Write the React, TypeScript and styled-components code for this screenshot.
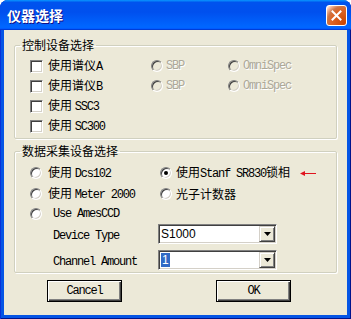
import React from 'react';
import styled, { createGlobalStyle } from 'styled-components';

const GlobalStyle = createGlobalStyle`
    html, body {
        margin: 0;
        padding: 0;
        background: #ffffff;
    }
    body {
        font-family: "Noto Sans CJK SC", "Liberation Sans", sans-serif;
        font-size: 12px;
        color: #000000;
    }
`;

const Window = styled.div`
    width: 351px;
    height: 319px;
    box-sizing: border-box;
    display: flex;
    flex-direction: column;
    background: #0555e5;
    border-radius: 8px 8px 0 0;
    box-shadow: inset 1px 0 #0831d9, inset -1px -1px #00138c;
    overflow: hidden;
`;

const TitleBar = styled.div`
    height: 30px;
    flex: none;
    display: flex;
    align-items: center;
    justify-content: space-between;
    padding: 0 4px 0 7px;
    background: linear-gradient(
        180deg,
        #0997ff,
        #0053ee 8%,
        #0050ee 40%,
        #0066ff 88%,
        #0066ff 93%,
        #005bff 95%,
        #003dd7 96%,
        #003dd7
    );
`;

const TitleText = styled.span`
    color: #ffffff;
    font-family: "Noto Sans CJK SC", sans-serif;
    font-weight: 700;
    font-size: 14px;
    line-height: 16px;
    text-shadow: 1px 1px #0f1089;
`;

const CloseButton = styled.div`
    width: 21px;
    height: 21px;
    box-sizing: border-box;
    border: 1px solid #ffffff;
    border-radius: 3px;
    display: grid;
    place-items: center;
    background: radial-gradient(
        circle at 90% 90%,
        #cc4600 0,
        #dc6527 55%,
        #cd7546 70%,
        #ffccb2 90%,
        #ffffff 100%
    );
`;

const Body = styled.div`
    flex: 1;
    margin: 0 4px 4px;
    padding: 8px 10px 0;
    background: #ece9d8;
    display: flex;
    flex-direction: column;
`;

const Group = styled.fieldset<{ $gapTop?: number }>`
    margin: ${(p) => p.$gapTop ?? 0}px 0 0;
    padding: 0;
    border: 1px solid #d0d0bf;
    border-radius: 2px;
    box-shadow: inset 1px 1px #ffffff, 1px 1px #ffffff;
    min-width: 0;
`;

const Legend = styled.legend`
    margin-left: 5px;
    padding: 0 2px;
    font-size: 12px;
    line-height: 14px;
    color: #000000;
`;

const DeviceGrid = styled.div`
    display: grid;
    grid-template-columns: 121px 77px 1fr;
    grid-auto-rows: 20px;
    align-items: center;
    padding: 4px 0 2px 15px;
`;

const RadioGrid = styled.div`
    display: grid;
    grid-template-columns: 128px 1fr;
    grid-template-rows: 20px 21px 20px;
    align-items: center;
    padding: 5px 0 0 15px;
`;

const FieldGrid = styled.div`
    display: grid;
    grid-template-columns: 128px 1fr;
    grid-auto-rows: 20px;
    row-gap: 6px;
    align-items: center;
    padding: 0 0 2px 15px;
`;

const Option = styled.label<{ $gap?: number; $disabled?: boolean }>`
    display: flex;
    align-items: center;
    gap: ${(p) => p.$gap ?? 5}px;
    white-space: nowrap;
    line-height: 14px;
    color: ${(p) => (p.$disabled ? '#aca899' : '#000000')};
    text-shadow: ${(p) => (p.$disabled ? '1px 1px #ffffff' : 'none')};
`;

const FieldLabel = styled.span`
    padding-left: 23px;
    white-space: nowrap;
`;

const Mono = styled.span`
    font-family: "Liberation Mono", "DejaVu Sans Mono", monospace;
    font-size: 12px;
    letter-spacing: -1.2px;
`;

const CheckBox = styled.span`
    width: 13px;
    height: 13px;
    box-sizing: border-box;
    flex: none;
    background: #ffffff;
    border: 1px solid;
    border-color: #808080 #ffffff #ffffff #808080;
    box-shadow: inset 1px 1px #404040, inset -1px -1px #d4d0c8;
`;

const Radio = styled.span<{ $checked?: boolean; $disabled?: boolean }>`
    width: 12px;
    height: 12px;
    box-sizing: border-box;
    flex: none;
    border-radius: 50%;
    display: grid;
    place-items: center;
    background: ${(p) => (p.$disabled ? '#ece9d8' : '#ffffff')};
    border: 1px solid;
    border-color: #808080 #ffffff #ffffff #808080;
    box-shadow: inset 1px 1px #404040, inset -1px -1px #d4d0c8;

    &::after {
        content: '';
        width: 4px;
        height: 4px;
        border-radius: 50%;
        background: ${(p) => (p.$checked ? '#000000' : 'transparent')};
    }
`;

const Combo = styled.div`
    width: 119px;
    height: 20px;
    box-sizing: border-box;
    display: flex;
    align-items: center;
    padding: 1px;
    background: #ffffff;
    border: 1px solid;
    border-color: #808080 #ffffff #ffffff #808080;
    box-shadow: inset 1px 1px #404040, inset -1px -1px #d4d0c8;
`;

const ComboValue = styled.span`
    flex: 1;
    padding-left: 1px;
    font-family: "Liberation Sans", sans-serif;
    font-size: 12px;
    line-height: 14px;
`;

const Selected = styled.span`
    display: inline-block;
    padding: 0 1px;
    background: #316ac5;
    color: #ffffff;
`;

const DropButton = styled.span`
    width: 16px;
    height: 16px;
    box-sizing: border-box;
    flex: none;
    display: grid;
    place-items: center;
    background: #ece9d8;
    border: 1px solid;
    border-color: #d4d0c8 #404040 #404040 #d4d0c8;
    box-shadow: inset 1px 1px #ffffff, inset -1px -1px #808080;
`;

const RightCell = styled.div`
    display: flex;
    align-items: center;
    padding-left: 2px;
`;

const Arrow = styled.svg`
    margin-left: 10px;
    flex: none;
`;

const ButtonRow = styled.div`
    display: flex;
    gap: 94px;
    padding: 7px 0 0 33px;
`;

const Button = styled.button`
    width: 75px;
    height: 22px;
    box-sizing: border-box;
    padding: 0;
    background: #ece9d8;
    border: 1px solid #000000;
    box-shadow: inset 1px 1px #ffffff, inset -1px -1px #404040, inset -2px -2px #808080;
    font-family: "Liberation Mono", monospace;
    font-size: 12px;
    letter-spacing: -1.2px;
    color: #000000;
`;

const DownTriangle: React.FC = () => (
    <svg width="7" height="4" viewBox="0 0 7 4">
        <path d="M0 0H7L3.5 4Z" fill="#000" />
    </svg>
);

const deviceRows = [
    { head: '使用谱仪', tail: 'A', radios: true },
    { head: '使用谱仪', tail: 'B', radios: true },
    { head: '使用 ', tail: 'SSC3', radios: false },
    { head: '使用 ', tail: 'SC300', radios: false }
];

const App: React.FC = () => (
    <>
        <GlobalStyle />
        <Window>
            <TitleBar>
                <TitleText>仪器选择</TitleText>
                <CloseButton>
                    <svg width="11" height="11" viewBox="0 0 11 11">
                        <path
                            d="M1.5 1.5L9.5 9.5M9.5 1.5L1.5 9.5"
                            stroke="#fff"
                            strokeWidth="2"
                            strokeLinecap="square"
                        />
                    </svg>
                </CloseButton>
            </TitleBar>
            <Body>
                <Group>
                    <Legend>控制设备选择</Legend>
                    <DeviceGrid>
                        {deviceRows.map((row) => (
                            <React.Fragment key={row.tail}>
                                <Option>
                                    <CheckBox />
                                    <span>
                                        {row.head}
                                        <Mono>{row.tail}</Mono>
                                    </span>
                                </Option>
                                {row.radios ? (
                                    <>
                                        <Option $disabled $gap={3}>
                                            <Radio $disabled />
                                            <Mono>SBP</Mono>
                                        </Option>
                                        <Option $disabled $gap={3}>
                                            <Radio $disabled />
                                            <Mono>OmniSpec</Mono>
                                        </Option>
                                    </>
                                ) : (
                                    <>
                                        <span />
                                        <span />
                                    </>
                                )}
                            </React.Fragment>
                        ))}
                    </DeviceGrid>
                </Group>

                <Group $gapTop={5}>
                    <Legend>数据采集设备选择</Legend>
                    <RadioGrid>
                        <Option $gap={6}>
                            <Radio />
                            <span>
                                使用 <Mono>Dcs102</Mono>
                            </span>
                        </Option>
                        <RightCell>
                            <Option $gap={4}>
                                <Radio $checked />
                                <span>
                                    使用<Mono>Stanf SR830</Mono>锁相
                                </span>
                            </Option>
                            <Arrow width="16" height="7" viewBox="0 0 16 7">
                                <path d="M0 3.5L5 1V3H16V4H5V6Z" fill="#e0141e" />
                            </Arrow>
                        </RightCell>
                        <Option $gap={6}>
                            <Radio />
                            <span>
                                使用 <Mono>Meter 2000</Mono>
                            </span>
                        </Option>
                        <RightCell>
                            <Option $gap={4}>
                                <Radio />
                                <span>光子计数器</span>
                            </Option>
                        </RightCell>
                        <Option $gap={11}>
                            <Radio />
                            <Mono>Use AmesCCD</Mono>
                        </Option>
                        <span />
                    </RadioGrid>
                    <FieldGrid>
                        <FieldLabel>
                            <Mono>Device Type</Mono>
                        </FieldLabel>
                        <Combo>
                            <ComboValue>S1000</ComboValue>
                            <DropButton>
                                <DownTriangle />
                            </DropButton>
                        </Combo>
                        <FieldLabel>
                            <Mono>Channel Amount</Mono>
                        </FieldLabel>
                        <Combo>
                            <ComboValue>
                                <Selected>1</Selected>
                            </ComboValue>
                            <DropButton>
                                <DownTriangle />
                            </DropButton>
                        </Combo>
                    </FieldGrid>
                </Group>

                <ButtonRow>
                    <Button>Cancel</Button>
                    <Button>OK</Button>
                </ButtonRow>
            </Body>
        </Window>
    </>
);

export default App;
